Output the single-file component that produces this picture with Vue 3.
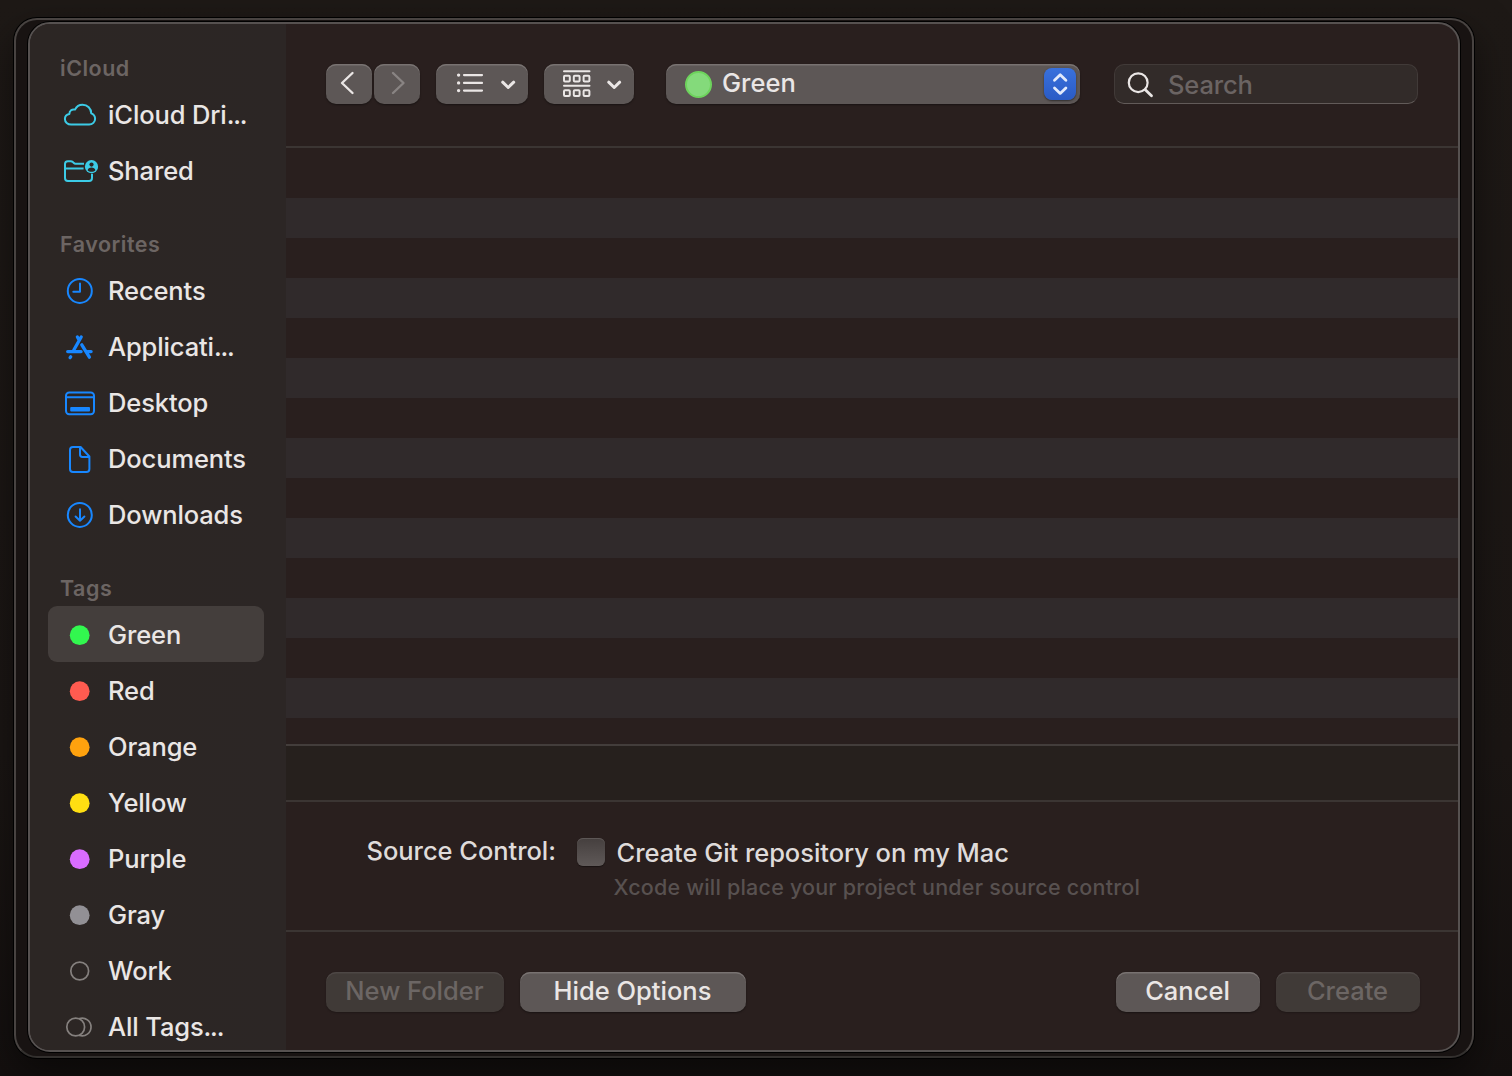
<script setup>
const sections = [
  {
    title: 'iCloud',
    items: [
      { label: 'iCloud Dri', more: '...', icon: 'cloud' },
      { label: 'Shared', icon: 'shared' },
    ],
  },
  {
    title: 'Favorites',
    items: [
      { label: 'Recents', icon: 'clock' },
      { label: 'Applicati', more: '...', icon: 'apps' },
      { label: 'Desktop', icon: 'desktop' },
      { label: 'Documents', icon: 'document' },
      { label: 'Downloads', icon: 'download' },
    ],
  },
  {
    title: 'Tags',
    items: [
      { label: 'Green', color: '#32f74f', selected: true },
      { label: 'Red', color: '#ff5b50' },
      { label: 'Orange', color: '#ffa20e' },
      { label: 'Yellow', color: '#ffdf12' },
      { label: 'Purple', color: '#d96cff' },
      { label: 'Gray', color: '#929095' },
      { label: 'Work', icon: 'ring' },
      { label: 'All Tags', more: '...', icon: 'rings' },
    ],
  },
]
</script>

<template>
  <div class="screen">
    <div class="back-window">
      <div class="dialog">
        <aside class="sidebar">
          <section v-for="s in sections" :key="s.title" class="group">
            <h2>{{ s.title }}</h2>
            <div v-for="i in s.items" :key="i.label" class="item" :class="{ selected: i.selected }">
              <svg class="icon" :class="i.icon && `icon-${i.icon}`" width="40" height="40" viewBox="0 0 40 40" fill="none" stroke="currentColor" stroke-width="2" stroke-linecap="round" stroke-linejoin="round">
                <circle v-if="i.color" cx="19.7" cy="21.2" r="9.9" :fill="i.color" stroke="none" />
                <path v-else-if="i.icon === 'cloud'" d="M11.2 30.6C7.6 30.6 4.9 28.2 4.9 25.1c0-2.8 2-4.8 4.500-5.200-.1-3 2.600-5.100 5.600-4.300 1.400-2.900 4.100-4.900 7.500-4.900 5 0 8.700 3.700 8.800 8.700 2.300.9 3.800 2.900 3.800 5.300 0 3.300-2.600 5.900-6 5.900z" />
                <template v-else-if="i.icon === 'shared'">
                  <path d="M24 13.700H15.500c-.8 0-1.300-.3-1.900-.9l-.7-.7c-.7-.6-1.300-.9-2.200-.9H7.800c-1.900 0-2.800 1-2.800 2.800v14.100c0 1.900 1 2.900 2.900 2.900h21.200c1.900 0 2.900-1 2.900-2.900v-4.400M5 18.400h18.600" stroke-linecap="butt" />
                  <circle cx="31.500" cy="16.700" r="6.600" fill="currentColor" stroke="none" />
                  <circle cx="31.500" cy="14.600" r="2.100" fill="#2c2624" stroke="none" />
                  <path d="M27.600 20.200c.4-1.700 1.900-2.600 3.900-2.600s3.500.9 3.900 2.600c-1 1-2.300 1.600-3.900 1.600s-2.900-.6-3.900-1.600z" fill="#2c2624" stroke="none" />
                </template>
                <template v-else-if="i.icon === 'clock'">
                  <circle cx="19.800" cy="20.900" r="12" />
                  <path d="M20 13.500v8.200h-6.700" />
                </template>
                <g v-else-if="i.icon === 'apps'" stroke-width="3.300">
                  <path d="M21.200 11L13.800 24M17.400 11l1.500 2.600M7.700 25.600h13.400M21.800 18.800l7.600 12.400M27.500 25.600h3.600M10.700 30.800l-.6.900" />
                </g>
                <template v-else-if="i.icon === 'desktop'">
                  <rect x="6" y="10.600" width="28" height="21.600" rx="3.200" />
                  <path d="M6 15.200h28" />
                  <rect x="10.200" y="25.100" width="19.800" height="4.400" rx="1" fill="currentColor" stroke="none" />
                </template>
                <path v-else-if="i.icon === 'document'" d="M20.600 9H13c-2 0-3 1-3 3v19c0 2 1 3 3 3h13.400c2 0 3-1 3-3V18.500zM20 9.300v7.200c0 1.600.8 2.400 2.400 2.400h6.800" />
                <template v-else-if="i.icon === 'download'">
                  <circle cx="19.800" cy="20.900" r="12" />
                  <path d="M20 15.300v11.400M15.600 22.500l4.400 4.300 4.400-4.300" />
                </template>
                <circle v-else-if="i.icon === 'ring'" cx="19.700" cy="21" r="8.900" stroke-width="1.700" />
                <template v-else>
                  <circle cx="15.700" cy="21" r="8.900" stroke-width="1.700" />
                  <path d="M19.500 12.500a8.900 8.900 0 1 1 0 17" stroke-width="1.700" />
                </template>
              </svg>
              <span class="name">{{ i.label }}<span v-if="i.more" class="more">{{ i.more }}</span></span>
            </div>
          </section>
        </aside>

        <main class="main">
          <header class="toolbar">
            <button class="btn nav">
              <svg width="46" height="40" viewBox="0 0 46 40" fill="none" stroke="#eae6e5" stroke-width="2.400" stroke-linecap="round" stroke-linejoin="round"><path d="M26.500 9L16 19l10.500 10" /></svg>
            </button>
            <button class="btn nav">
              <svg width="46" height="40" viewBox="0 0 46 40" fill="none" stroke="#898483" stroke-width="2.400" stroke-linecap="round" stroke-linejoin="round"><path d="M19 9l10.500 10L19 29" /></svg>
            </button>
            <button class="btn list">
              <svg width="92" height="40" viewBox="0 0 92 40" fill="none" stroke="#eae6e5" stroke-width="2.200" stroke-linecap="round" stroke-linejoin="round">
                <path d="M28 11.100h18M28 18.900h18M28 26.600h18" />
                <path d="M22.600 11.100h.01M22.600 18.900h.01M22.600 26.600h.01" stroke-width="3.400" />
                <path d="M66.700 18.200l5.500 5.300 5.500-5.300" stroke-width="3" />
              </svg>
            </button>
            <button class="btn grid">
              <svg width="90" height="40" viewBox="0 0 90 40" fill="none" stroke="#eae6e5" stroke-width="2" stroke-linecap="round" stroke-linejoin="round">
                <path d="M20 7.200h25.500M20 21.800h25.500" />
                <rect v-for="n in 6" :key="n" :x="20 + ((n - 1) % 3) * 9.800" :y="n < 4 ? 11.800 : 26.300" width="5.800" height="5.800" rx="1" />
                <path d="M64.700 18.200l5.500 5.300 5.500-5.300" stroke-width="3" />
              </svg>
            </button>
            <button class="btn popup">
              <i class="dot"></i>
              <span>Green</span>
              <svg class="stepper" width="32" height="32" viewBox="0 0 32 32" fill="none" stroke="#e2eafb" stroke-width="2.800" stroke-linecap="round" stroke-linejoin="round"><path d="M10.500 12.200L16.200 6.800l5.700 5.400M10.500 20l5.700 5.400 5.700-5.400" /></svg>
            </button>
            <div class="search">
              <svg width="28" height="28" viewBox="0 0 28 28" fill="none" stroke="#eae6e5" stroke-linecap="round"><circle cx="11.200" cy="11.700" r="9.400" stroke-width="2.200" /><path d="M18.300 18.800l6.200 6" stroke-width="2.800" /></svg>
              <span>Search</span>
            </div>
          </header>
          <div class="files"></div>
          <div class="path"></div>
          <div class="options">
            <span class="label">Source Control:</span>
            <i class="check"></i>
            <div class="texts">
              <div class="git">Create Git repository on my Mac</div>
              <div class="hint">Xcode will place your project under source control</div>
            </div>
          </div>
          <footer class="footer">
            <button class="btn off new"><span>New Folder</span></button>
            <button class="btn hide"><span>Hide Options</span></button>
            <button class="btn cancel"><span>Cancel</span></button>
            <button class="btn off create"><span>Create</span></button>
          </footer>
        </main>
      </div>
    </div>
  </div>
</template>

<style>
body { background: #1c1714; }
</style>

<style scoped>
* { box-sizing: border-box; }
.screen {
  width: 1512px;
  height: 1076px;
  padding: 18px 38px 18px 14px;
  overflow: hidden;
  background: linear-gradient(180deg, #1e1916 0%, #1b1614 70%, #14100f 100%);
  font-family: Inter, "Liberation Sans", sans-serif;
  font-size: 25.500px;
  color: #eae6e5;
}
.back-window {
  width: 1460px;
  height: 1040px;
  padding: 2px 12px 4px;
  border: 2px solid #484341;
  border-bottom-color: #33302e;
  border-radius: 23px;
  background: #181312;
  box-shadow: 0 0 0 1px #000, 0 16px 40px rgba(0, 0, 0, .5);
}
.dialog {
  display: flex;
  width: 1432px;
  height: 1030px;
  border: 2px solid #565150;
  border-radius: 22px;
  background: #291f1e;
  box-shadow: 0 0 0 1px #000;
  overflow: hidden;
}
.sidebar {
  width: 256px;
  padding: 26px 22px 0 18px;
  background: linear-gradient(90deg, #2c2624, #2c2625);
  overflow: hidden;
  flex: none;
}
.group { margin-bottom: 28px; }
h2 {
  margin: 0;
  height: 36px;
  padding-left: 12px;
  font-size: 21.500px;
  line-height: 37px;
  font-weight: 600;
  letter-spacing: .5px;
  color: #6c6563;
}
.item {
  display: flex;
  align-items: center;
  height: 56px;
  padding-left: 12px;
  border-radius: 9px;
  white-space: nowrap;
  font-weight: 450;
  letter-spacing: -.12px;
}
.item.selected { background: #443e3c; }
.name { margin-left: 8px; line-height: 56px; padding-top: 1px; }
.more { letter-spacing: -1.200px; }
.icon { flex: none; color: #1887ff; overflow: visible; }
.icon-cloud, .icon-shared { color: #3ccbe6; }
.icon-ring, .icon-rings { color: #85807e; }
.main { flex: 1; display: flex; flex-direction: column; }
.toolbar {
  display: flex;
  height: 124px;
  padding: 40px 40px 0;
  border-bottom: 2px solid #3b3533;
}
.btn {
  display: flex;
  align-items: center;
  justify-content: center;
  height: 40px;
  padding: 0;
  border: 0;
  border-radius: 10px;
  background: #5d5756;
  box-shadow: inset 0 1.500px 0 #787271, 0 1px 2px rgba(0, 0, 0, .4);
  font: inherit;
  font-weight: 450;
  color: #eae6e5;
  flex: none;
  white-space: nowrap;
}
.nav { width: 46px; margin-right: 2px; }
.list { width: 92px; margin-left: 14px; }
.grid { width: 90px; margin-left: 16px; }
.popup { width: 414px; margin-left: 32px; padding: 0 4px 0 18.500px; justify-content: flex-start; }
.popup span { margin: -3px 0 0 10.500px; }
.dot { width: 27px; height: 27px; border-radius: 50%; background: #84da7b; border: 2px solid #6dd35c; }
.stepper { margin-left: auto; border-radius: 8px; background: linear-gradient(#3971dd, #2a5bc5); box-shadow: 0 1px 2px rgba(0, 0, 0, .5); }
.search {
  display: flex;
  align-items: center;
  width: 304px;
  height: 40px;
  margin-left: 34px;
  padding: 1px 0 0 12px;
  border: 1px solid #413a38;
  border-bottom-color: #625b59;
  border-radius: 10px;
  background: #322b29;
  color: #6b6463;
  font-weight: 450;
  letter-spacing: -.15px;
}
.search span { margin-left: 13px; }
.files {
  height: 598px;
  padding-top: 50px;
  background: repeating-linear-gradient(#302a2b 0 40px, #291f1e 40px 80px) content-box, #291f1e;
  border-bottom: 2px solid #433d3b;
}
.path { height: 56px; background: #26201d; border-bottom: 2px solid #3b3533; }
.options {
  display: flex;
  height: 130px;
  padding: 34px 0 0 80.500px;
  border-bottom: 2px solid #3b3533;
  white-space: nowrap;
  color: #dfdbda;
  font-weight: 450;
  letter-spacing: -.05px;
}
.label { width: 210.500px; line-height: 29px; }
.check {
  width: 28px;
  height: 28px;
  margin-top: 2px;
  border-radius: 6px;
  background: linear-gradient(#453f3e, #5f5958);
  box-shadow: inset 0 1px 0 #5d5756, 0 1px 1px rgba(0, 0, 0, .4);
}
.texts { padding-left: 11.500px; }
.git { line-height: 33px; }
.hint { margin-left: -3px; font-size: 21.500px; line-height: 37px; letter-spacing: .2px; color: #585150; }
.footer { display: flex; padding: 40px 38px 0 40px; }
.off { background: #403a37; color: #6c6664; box-shadow: inset 0 1.500px 0 #4d4745, 0 1px 2px rgba(0, 0, 0, .25); }
.footer span { margin: -4px 1px 0 0; }
.new { width: 178px; }
.hide { width: 226px; margin-left: 16px; }
.cancel { width: 144px; margin-left: auto; }
.create { width: 144px; margin-left: 16px; }
</style>
